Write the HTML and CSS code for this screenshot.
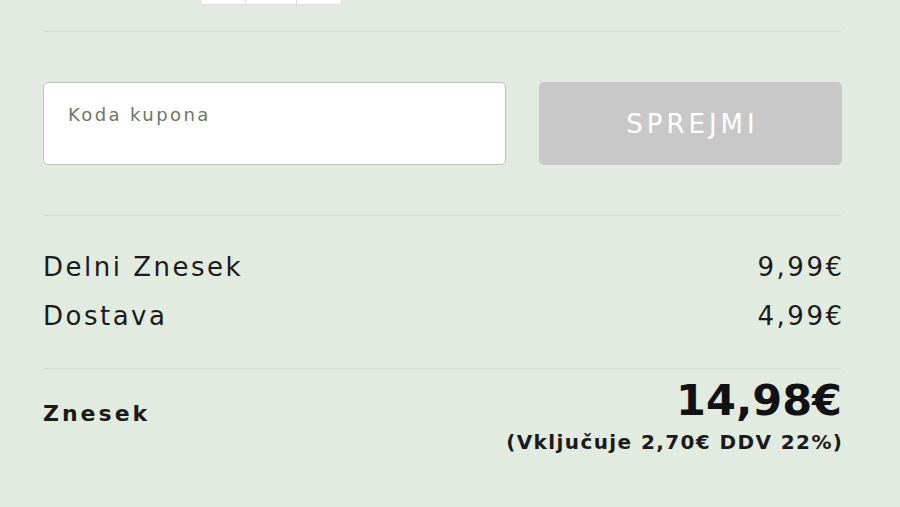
FILE: index.html
```html
<!DOCTYPE html>
<html lang="sl">
<head>
    <meta charset="UTF-8">
    <meta name="viewport" content="width=device-width, initial-scale=1.0">
    <title>Košarica</title>
    <link rel="stylesheet" href="styles.css">
</head>
<body>
    <div class="cart">
        <div class="qty-row">
            <div class="qty">
                <span class="qty-btn"></span>
                <span class="qty-num"></span>
                <span class="qty-btn"></span>
            </div>
        </div>

        <form class="coupon">
            <input type="text" class="coupon-input" placeholder="Koda kupona">
            <button type="button" class="coupon-btn">SPREJMI</button>
        </form>

        <div class="totals">
            <div class="row">
                <span>Delni Znesek</span>
                <span class="amount">9,99€</span>
            </div>
            <div class="row">
                <span>Dostava</span>
                <span class="amount">4,99€</span>
            </div>
        </div>

        <div class="grand">
            <span class="grand-label">Znesek</span>
            <div class="grand-value">
                <div class="grand-price">14,98€</div>
                <div class="grand-tax">(Vključuje 2,70€ DDV 22%)</div>
            </div>
        </div>
    </div>
</body>
</html>
```

FILE: styles.css
```css
body {
    margin: 0;
    background: #e2ebe0;
    font-family: "DejaVu Sans", Verdana, sans-serif;
    color: #1a1a1a;
}
.cart {
    width: 799px;
    margin-left: 43px;
}
.qty-row {
    display: flex;
    align-items: flex-end;
    height: 31px;
    border-bottom: 1px solid #d3dbd0;
}
.qty {
    display: flex;
    flex-shrink: 0;
    width: 140px;
    height: 40px;
    margin-left: 157px;
    margin-bottom: 26px;
    background: #fff;
    border: 1px solid #dcdcdc;
    border-radius: 3px;
}
.qty-btn {
    width: 45px;
}
.qty-num {
    width: 50px;
    border-left: 1px solid #dcdcdc;
    border-right: 1px solid #dcdcdc;
}
.coupon {
    display: flex;
    gap: 33px;
    padding: 50px 0 50px;
    border-bottom: 1px solid #d3dbd0;
}
.coupon-input {
    box-sizing: border-box;
    width: 463px;
    height: 83px;
    margin: 0;
    padding: 0 24px 19px;
    border: 1px solid #bfc1bd;
    border-radius: 5px;
    background: #fff;
    font-family: inherit;
    font-size: 18px;
    letter-spacing: 2.4px;
}
.coupon-input::placeholder {
    color: #6d7861;
}
.coupon-btn {
    flex: 1;
    height: 83px;
    border: none;
    border-radius: 5px;
    background: #c8c8c8;
    color: #fff;
    font-family: inherit;
    font-size: 26px;
    letter-spacing: 4px;
    text-indent: 4px;
}
.totals {
    padding: 27px 0 27px;
    border-bottom: 1px solid #d3dbd0;
}
.row {
    display: flex;
    justify-content: space-between;
    font-size: 26px;
    line-height: 49px;
    letter-spacing: 2.5px;
}
.amount {
    margin-right: -2.5px;
}
.grand {
    display: flex;
    justify-content: space-between;
    align-items: flex-start;
    padding-top: 6px;
}
.grand-label {
    font-size: 22px;
    font-weight: bold;
    letter-spacing: 3px;
    line-height: 28px;
    margin-top: 25px;
}
.grand-value {
    text-align: right;
}
.grand-price {
    font-size: 43px;
    font-weight: bold;
    line-height: 50px;
    color: #111;
}
.grand-tax {
    font-size: 20px;
    font-weight: bold;
    line-height: 26px;
    letter-spacing: 1.4px;
    margin-top: 4px;
    margin-right: -1.4px;
}
```
